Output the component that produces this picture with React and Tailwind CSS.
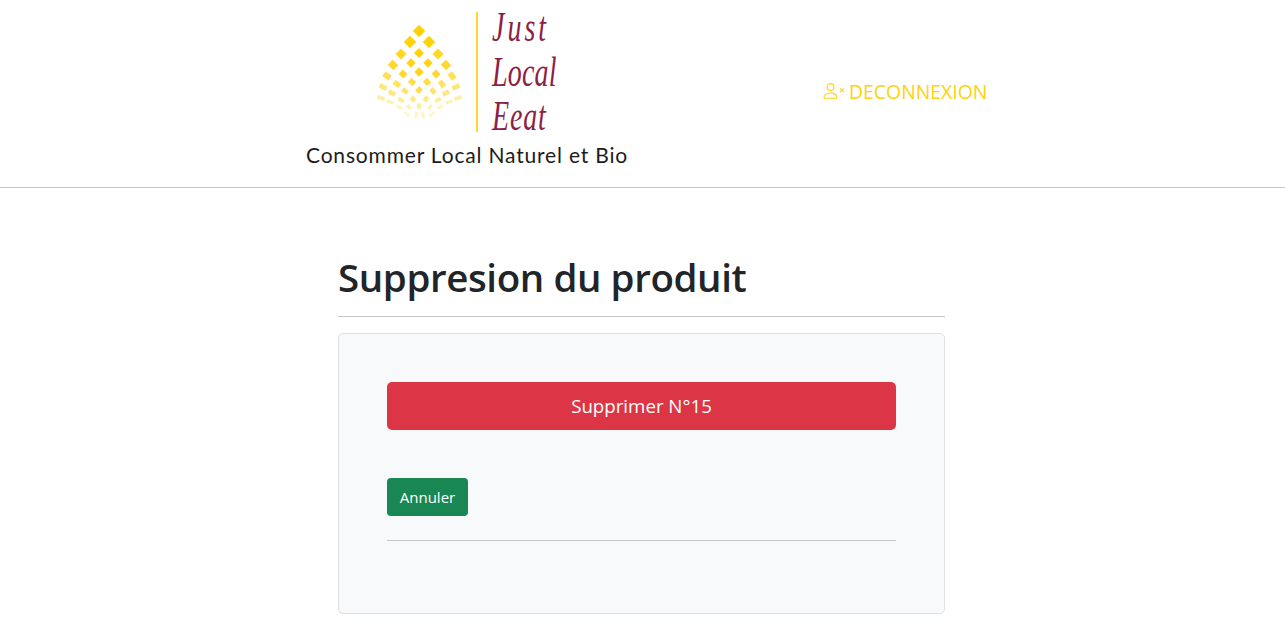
import React from 'react';

// [x, y, width, height, rotation, opacity] in header pixels
const DIAMONDS = [
  [419, 30, 8.8, 8.8, 45, 1],
  [410, 41, 8.8, 8.8, 45, 1], [429, 41, 8.8, 8.8, 45, 1],
  [401, 53, 7.8, 7.8, 45, 0.9], [419, 52, 7, 7, 45, 1], [438, 53, 7.8, 7.8, 45, 0.9],
  [393, 64, 7.8, 7.2, 42, 0.85], [411, 62, 6.6, 6.6, 45, 0.95], [428, 62, 6.6, 6.6, 45, 0.95], [446, 64, 7.8, 7.2, 48, 0.85],
  [387, 75, 7.8, 5.8, 35, 0.7], [403, 73, 6.6, 6.2, 42, 0.85], [419, 71, 6.6, 6.6, 45, 0.95], [436, 73, 6.6, 6.2, 48, 0.85], [452, 75, 7.8, 5.8, 55, 0.7],
  [383, 86, 7.8, 4.5, 25, 0.55], [397, 83, 7.2, 5.2, 35, 0.65], [412, 81, 6.2, 5.6, 42, 0.75], [427, 81, 6.2, 5.6, 48, 0.75], [442, 83, 7.2, 5.2, 55, 0.65], [456, 86, 7.8, 4.5, -25, 0.55],
  [381, 97, 7.8, 4, 18, 0.35], [392, 92, 7.2, 4.4, 28, 0.5], [405, 90, 6.2, 4.8, 38, 0.6], [419, 89, 5.2, 6, 45, 0.75], [433, 90, 6.2, 4.8, 52, 0.6], [446, 92, 7.2, 4.4, -28, 0.5], [458, 97, 7.8, 4, -18, 0.35],
  [390, 101, 7.2, 3.2, 22, 0.3], [401, 99, 6.2, 4, 30, 0.4], [413, 98, 5.2, 4.4, 55, 0.5], [426, 98, 5.2, 4.4, -55, 0.5], [438, 99, 6.2, 4, -30, 0.4], [449, 101, 7.2, 3.2, -22, 0.3],
  [399, 106, 6.4, 2.8, 28, 0.25], [409, 106, 5.4, 3.2, 50, 0.3], [419, 105, 4, 5.4, 0, 0.4], [430, 106, 5.4, 3.2, -50, 0.3], [440, 106, 6.4, 2.8, -28, 0.25],
  [407, 113, 6.4, 2.8, 40, 0.22], [416, 114, 2.8, 6.4, 15, 0.25], [423, 114, 2.8, 6.4, -15, 0.25], [432, 113, 6.4, 2.8, -40, 0.22],
];

const LogoMark = () => (
  <svg width="100" height="110" viewBox="370 20 100 110" className="shrink-0">
    {DIAMONDS.map(([x, y, w, h, rot, opacity], i) => (
      <rect
        key={i}
        x={x - w / 2}
        y={y - h / 2}
        width={w}
        height={h}
        fill="#ffd20a"
        opacity={opacity}
        transform={`rotate(${rot} ${x} ${y})`}
      />
    ))}
  </svg>
);

const PersonX = () => (
  <svg width="22" height="16" viewBox="0 0 22 16" fill="none" stroke="currentColor" strokeWidth="1.1" className="shrink-0">
    <circle cx="7.5" cy="4" r="3.4" />
    <path d="M1 14.6c0-3 3-4.6 6.5-4.6s6.5 1.6 6.5 4.6c0 .3-.2.6-.6.6H1.6c-.4 0-.6-.3-.6-.6z" />
    <path d="M17 5.4l3.8 3.8M20.8 5.4l-3.8 3.8" />
  </svg>
);

const Logo = () => (
  <div className="flex flex-col w-[322px]">
    <div className="flex items-start h-[131px]">
      <div className="ml-[64px] mt-[20px]">
        <LogoMark />
      </div>
      <div className="ml-[6px] mt-[11px] w-[2px] h-[120px] bg-[#fdd535]" />
      <div className="ml-[14px] flex flex-col font-['Liberation_Serif',serif] italic text-[#8e1f47] text-[28px] leading-[29.5px] scale-y-150 origin-top mt-[4px]">
        <span className="tracking-[3px]">Just</span>
        <span className="tracking-[0.2px]">Local</span>
        <span className="tracking-[0.8px]">Eeat</span>
      </div>
    </div>
    <div className="mt-[11px] font-['Lato',sans-serif] text-[21px] leading-[24px] text-[#1c1c1c] whitespace-nowrap tracking-[0.82px]">
      Consommer Local Naturel et Bio
    </div>
  </div>
);

export default function App() {
  return (
    <div className="min-h-[638px] bg-white font-['Open_Sans',sans-serif] text-[#212529]">
      <header className="flex items-center h-[188px] pl-[306px] pb-[20px] border-b border-[#c6c6c6]">
        <Logo />
        <a href="#" className="ml-[195px] mt-[16px] flex items-center gap-[4px] text-[#ffd20a] text-[19.4px]">
          <PersonX />
          DECONNEXION
        </a>
      </header>

      <main className="ml-[338px] w-[607px] pt-[59px]">
        <h1 className="text-[38.5px] leading-[60px] font-semibold tracking-[-0.4px]">Suppresion du produit</h1>
        <hr className="mt-[9px] border-[#c6c6c6]" />
        <div className="mt-[16px] h-[281px] p-[48px] bg-[#f8f9fa] border border-[#dfe0e1] rounded-[5px]">
          <button className="w-full h-[48px] bg-[#dc3545] text-white text-[18.7px] rounded-[5px]">
            Supprimer N°15
          </button>
          <button className="block mt-[48px] w-[81px] h-[38px] bg-[#198754] text-white text-[15px] rounded-[4px]">
            Annuler
          </button>
          <hr className="mt-[24px] border-[#c6c6c6]" />
        </div>
      </main>
    </div>
  );
}
